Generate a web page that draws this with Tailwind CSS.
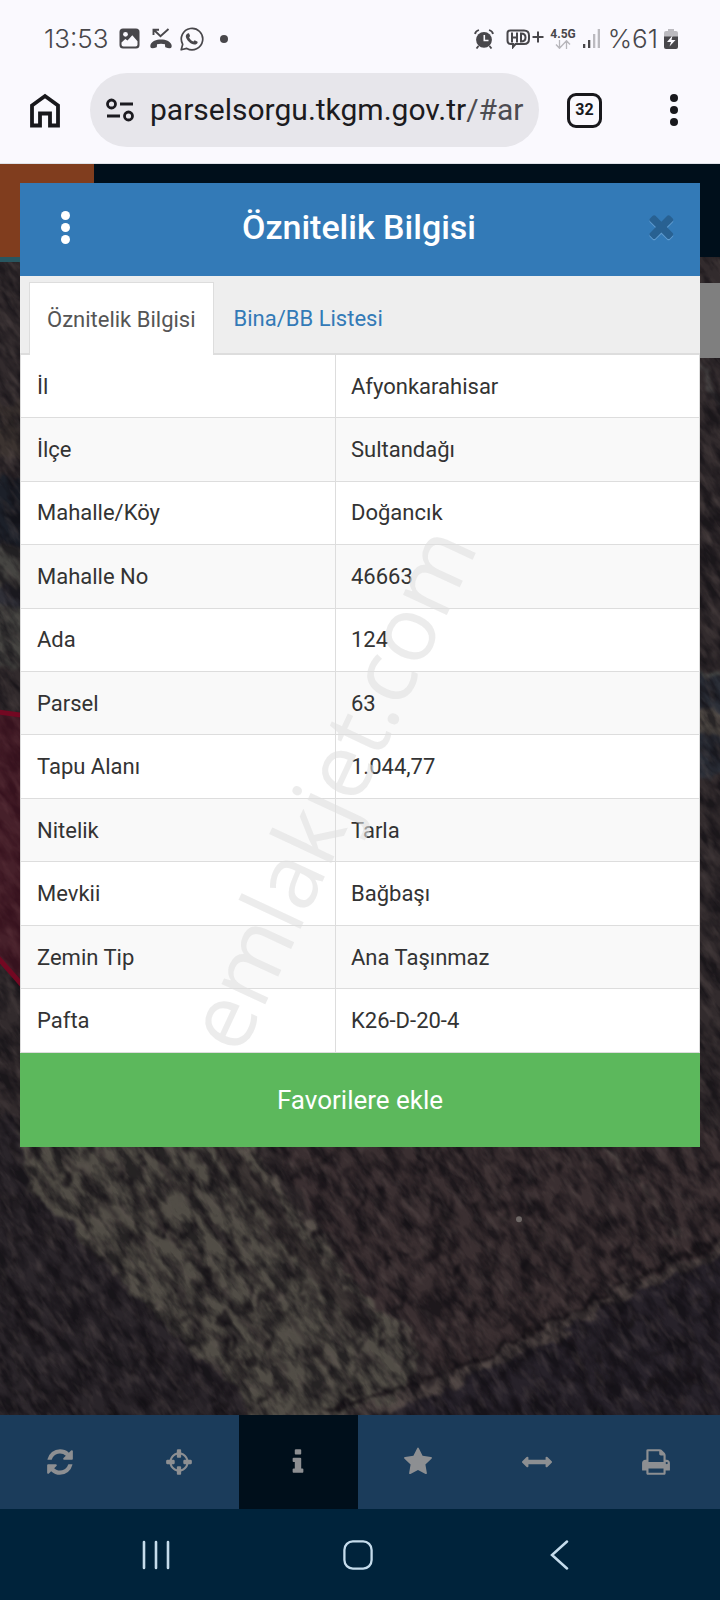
<!DOCTYPE html>
<html lang="tr">
<head>
<meta charset="utf-8">
<meta name="viewport" content="width=device-width, initial-scale=1">
<title>Parsel Sorgu</title>
<script src="https://cdn.jsdelivr.net/npm/@tailwindcss/browser@4"></script>
</head>
<body class="flex min-h-screen flex-col bg-[#00233b] font-['Roboto',sans-serif]">

<header class="border-b border-[#dfe2e8] bg-[#faf9fe] pb-4">
  <!-- Device status -->
  <div class="flex h-[73px] items-center pt-1 pr-[42px] pl-11 text-[#48474b]">
    <span class="font-['Inter',sans-serif] text-[26px] font-light">13:53</span>
    <svg class="ml-2.5 size-[21px]" viewBox="0 0 21 21" aria-hidden="true"><rect x=".5" y=".5" width="20" height="20" rx="3.5" fill="currentColor"/><circle cx="6.5" cy="6.3" r="2.4" fill="#faf9fe"/><path d="M2.5 14.5 6.3 11l2.2 1.5 4.8-5.3 5.2 6V16.500q0 2-2 2h-12q-2 0-2-2z" fill="#faf9fe"/></svg>
    <svg class="ml-2.5 h-[21px] w-[22px]" viewBox="0 0 22 21" aria-hidden="true"><path d="M3.500 7V1.800H9M4 2l6.500 6.300L18.500 1" fill="none" stroke="currentColor" stroke-width="1.900"/><path d="M1 20q-1-1-.6-3C2 13 6 11.500 11 11.500S20 13 21.600 17q.4 2-.6 3-2.500.4-5-.4-.8-.3-.9-1.200l-.1-2.200q-4-1-8 0l-.1 2.200q-.1.9-.9 1.200-2.500.8-5 .4z" fill="currentColor"/></svg>
    <svg class="ml-2 size-6" viewBox="0 0 24 24" aria-hidden="true"><path d="M1.200 22.800l1.500-5.500A10.700 10.700 0 1 1 6.800 21.400z" fill="none" stroke="currentColor" stroke-width="1.700" stroke-linejoin="round"/><path d="M8.300 6.200c.5 0 .7.100.9.600l.8 1.900c.1.400 0 .6-.9 1.700.9 1.900 2.400 3.300 4.500 4.200.9-1.100 1-1.400 1.500-1.200l2.100 1c.5.300.5.400.4 1.100-.3 1.500-1.900 2.200-3.100 2.100-3.700-.5-8-4.300-8.700-8.200 0-1.300.9-2.900 2.500-3.200z" fill="currentColor"/></svg>
    <span class="ml-4 size-2 rounded-full bg-current"></span>
    <svg class="ml-auto size-5" viewBox="0 0 20 20" aria-hidden="true"><circle cx="10" cy="10.800" r="7.900" fill="currentColor"/><path d="M1 5q.5-3 4-4M19 5q-.5-3-4-4M4.500 17 2.500 19.500M15.500 17l2 2.500" fill="none" stroke="currentColor" stroke-width="1.800"/><path d="M10.300 6v5.500h4.200" fill="none" stroke="#faf9fe" stroke-width="1.600"/></svg>
    <svg class="ml-3 h-5 w-[38px]" viewBox="0 0 38 20" aria-hidden="true"><path d="M4 1.500h14q5 0 5 5v3.500q0 5-5 5h-8.500L7 18v-3H5q-3.500 0-3.500-3.500V4q0-2.500 2.500-2.500zM6 3.500v10M11 3.500v10M6 8.500h5M15 4.500v8q4.500 0 4.500-4t-4.500-4zM26.500 8h11M32 2.500v11" fill="none" stroke="currentColor" stroke-width="2"/></svg>
    <span class="ml-1.5 flex flex-col items-center text-[12px] leading-3 font-bold">4.5G
      <svg class="h-[9px] w-4" viewBox="0 0 16 9" aria-hidden="true"><path d="M4.500 0v8M1 4.500l3.500 3.800L8 4.500M11.500 9V1M8 4.500 11.500.7 15 4.500" fill="none" stroke="#b7b6bb" stroke-width="1.300"/></svg></span>
    <svg class="ml-1.5 h-[19px] w-[18px]" viewBox="0 0 18 19" aria-hidden="true"><path d="M1 15h2.300v4H1zM6 11h2.300v8H6z" fill="currentColor"/><path d="M11 5h2.300v14H11zM15.700 0H18v19h-2.300z" fill="#bbbabf"/></svg>
    <span class="ml-2 font-['Inter',sans-serif] text-[26px] font-light">%61</span>
    <svg class="ml-1.5 h-5 w-[14px]" viewBox="0 0 14 20" aria-hidden="true"><path d="M4 0h6v2h2q2 0 2 2v4H0V4q0-2 2-2h2z" fill="#bbbabf"/><path d="M0 7.500h14V18q0 2-2 2H2q-2 0-2-2z" fill="currentColor"/><path d="M8.500 6.500 3 13h4l-1.500 4.500L11.500 11h-4z" fill="#faf9fe"/></svg>
  </div>
  <!-- Browser toolbar -->
  <div class="flex items-center">
    <button type="button" aria-label="Ana sayfa" class="ml-[29px] shrink-0"><svg class="h-[35px] w-8" viewBox="0 0 32 35" aria-hidden="true"><path d="M3 12.500 16 3l13 9.500V32.500h-8V20.500H11v12H3z" fill="none" stroke="#18181c" stroke-width="3.800"/></svg></button>
    <div class="ml-[29px] flex h-[74px] min-w-0 flex-1 items-center rounded-full bg-[#e7e6eb] pr-3 pl-4">
      <svg class="h-6 w-7 shrink-0" viewBox="0 0 28 24" aria-hidden="true"><g fill="none" stroke="#1c1b20" stroke-width="2.800"><circle cx="5.500" cy="6" r="4"/><circle cx="22.500" cy="18" r="4"/><path d="M14 6h13M1 18h13"/></g></svg>
      <div aria-label="Adres" role="textbox" class="ml-4 min-w-0 flex-1 overflow-hidden text-[30px] leading-10 whitespace-nowrap text-[#1c1b20]">parselsorgu.tkgm.gov.tr<span class="text-[#4d4c51]">/#ar</span></div>
    </div>
    <button type="button" aria-label="32 sekme" class="ml-7 flex size-[35px] shrink-0 items-center justify-center rounded-[9px] border-[3px] border-[#18181c] text-base font-bold text-[#18181c]">32</button>
    <button type="button" aria-label="Menü" class="mr-[42px] ml-[68px] flex shrink-0 flex-col gap-1"><i class="size-2 rounded-full bg-[#18181c]"></i><i class="size-2 rounded-full bg-[#18181c]"></i><i class="size-2 rounded-full bg-[#18181c]"></i></button>
  </div>
</header>

<main class="relative flex flex-1 flex-col bg-[#2b2729]">
  <div class="h-[93px] bg-[#000f1b]"><div class="h-full w-[94px] bg-[#803d1e]"></div></div>

  <!-- Dimmed aerial map -->
  <div class="relative min-h-[1150px] flex-1 overflow-hidden">
    <svg class="absolute inset-0 size-full" viewBox="0 257 720 1159" preserveAspectRatio="none" aria-hidden="true">
      <defs>
        <filter id="soil" x="0" y="0" width="100%" height="100%" color-interpolation-filters="sRGB"><feTurbulence type="fractalNoise" baseFrequency=".035 .09" numOctaves="4" seed="8"/><feColorMatrix values="0 0 0 0 .06  0 0 0 0 .05  0 0 0 0 .07  3 0 0 0 -1.100"/></filter>
        <filter id="dust" x="0" y="0" width="100%" height="100%" color-interpolation-filters="sRGB"><feTurbulence type="fractalNoise" baseFrequency=".05 .14" numOctaves="3" seed="21"/><feColorMatrix values="0 0 0 0 .42  0 0 0 0 .37  0 0 0 0 .36  0 2.500 0 0 -1.200"/></filter>
        <filter id="rough" filterUnits="userSpaceOnUse" x="-20" y="240" width="760" height="1200" color-interpolation-filters="sRGB"><feTurbulence type="fractalNoise" baseFrequency=".06" numOctaves="3" seed="3"/><feDisplacementMap in="SourceGraphic" scale="22" xChannelSelector="R" yChannelSelector="G"/><feGaussianBlur stdDeviation="1.500"/></filter>
      </defs>
      <rect y="257" width="720" height="1159" fill="#322b2d"/>
      <g filter="url(#rough)">
        <path d="M-20 1120H20L32 1190 83 1243 142 1303 197 1353 240 1395V1440H-20z" fill="#2a252a"/>
        <path d="M18 1130H240L321 1243 358 1290 425 1350 400 1395 330 1425H250L232 1385 142 1303 83 1243 32 1190z" fill="#514d46"/>
        <path d="M260 1130H740V1240L574 1318 440 1375 360 1290z" fill="#3a2f31"/>
        <g fill="none" stroke="#3b3634" stroke-width="7">
          <path d="M50 1140 250 1380"/><path d="M95 1140 290 1375"/><path d="M140 1140 335 1375"/><path d="M185 1140 370 1365"/>
        </g>
        <path d="M215 1135 300 1250 370 1330" fill="none" stroke="#373130" stroke-width="20"/>
        <path d="M240 1140 321 1243 358 1290 420 1345" fill="none" stroke="#57504a" stroke-width="5"/>
        <path d="M344 1430 427 1395 574 1325 740 1245V1440H344z" fill="#27222a"/>
        <path d="M320 1425 427 1393 574 1323 640 1286 740 1242" fill="none" stroke="#4c4341" stroke-width="11"/>
        <path d="M320 1412 427 1382 574 1313 640 1275 740 1230" fill="none" stroke="#1b1619" stroke-width="4"/>
        <path d="M600 1145 650 1195 682 1242" fill="none" stroke="#4b4341" stroke-width="4"/>
        <path d="M-10 400H40V470L-10 450z" fill="#3b3330"/>
        <path d="M-10 545 40 548V672L-10 665z" fill="#464542"/><path d="M-10 585 40 592V612L-10 604z" fill="#303038"/>
        <path d="M-10 480H30V545H-10z" fill="#1c2029"/>
        <path d="M690 674 735 680V780L690 772z" fill="#2b2f38"/><path d="M690 708 735 716V738L690 732z" fill="#5a544d"/><path d="M690 674 735 680" stroke="#505451" stroke-width="4"/>
        <path d="M690 350 735 430" stroke="#4a4747" stroke-width="6"/>
      </g>
      <g id="trees" fill="#191519" filter="url(#rough)"></g>
      <g transform="rotate(55 360 840)">
        <rect x="-500" y="100" width="1720" height="1480" filter="url(#soil)" opacity=".65"/>
        <rect x="-500" y="100" width="1720" height="1480" filter="url(#dust)" opacity=".3"/>
      </g>
      <path d="M-5 712 40 718V1006L-5 955z" fill="#6d0b26" fill-opacity=".35" stroke="#730822" stroke-width="5"/>
      <circle cx="519" cy="1220" r="3" fill="#6e6866"/>
      <path d="M0 257H94V262H0z" fill="#285761"/>
      <path d="M690 283H720V358H690z" fill="#7f7f7f"/>
    </svg>
  </div>

  <nav aria-label="Harita araçları" class="grid h-[94px] grid-cols-6 bg-[#1b3c5b] pr-1 text-[#8d8f92]">
    <button type="button" aria-label="Yenile" class="flex items-center justify-center"><svg class="size-[30px]" viewBox="0 0 1792 1792" fill="currentColor" aria-hidden="true"><path d="M1639 1056q0 5-1 7-64 268-268 434.5t-478 166.5q-146 0-282.5-55t-243.500-157l-129 129q-19 19-45 19t-45-19-19-45v-448q0-26 19-45t45-19h448q26 0 45 19t19 45-19 45l-137 137q71 66 161 102t187 36q134 0 250-65t186-179q11-17 53-117 8-23 30-23h192q13 0 22.500 9.500t9.500 22.500zm25-800v448q0 26-19 45t-45 19h-448q-26 0-45-19t-19-45 19-45l138-138q-148-137-349-137-134 0-250 65t-186 179q-11 17-53 117-8 23-30 23h-199q-13 0-22.500-9.500t-9.500-22.500v-7q65-268 270-434.500t480-166.500q146 0 284 55.500t245 156.500l130-129q19-19 45-19t45 19 19 45z"/></svg></button>
    <button type="button" aria-label="Konum" class="flex items-center justify-center"><svg class="size-[30px]" viewBox="0 0 1792 1792" fill="currentColor" aria-hidden="true"><path d="M1325 1024h-109q-26 0-45-19t-19-45v-128q0-26 19-45t45-19h109q-32-108-112.500-188.500t-188.500-112.500v109q0 26-19 45t-45 19h-128q-26 0-45-19t-19-45v-109q-108 32-188.500 112.500t-112.500 188.500h109q26 0 45 19t19 45v128q0 26-19 45t-45 19h-109q32 108 112.500 188.500t188.500 112.500v-109q0-26 19-45t45-19h128q26 0 45 19t19 45v109q108-32 188.500-112.500t112.500-188.500zm339-192v128q0 26-19 45t-45 19h-143q-37 161-154.500 278.500t-278.500 154.500v143q0 26-19 45t-45 19h-128q-26 0-45-19t-19-45v-143q-161-37-278.500-154.500t-154.500-278.500h-143q-26 0-45-19t-19-45v-128q0-26 19-45t45-19h143q37-161 154.500-278.500t278.500-154.500v-143q0-26 19-45t45-19h128q26 0 45 19t19 45v143q161 37 278.500 154.500t154.500 278.500h143q26 0 45 19t19 45z"/></svg></button>
    <button type="button" aria-label="Bilgi" aria-pressed="true" class="flex items-center justify-center bg-[#000f1b]"><svg class="size-[30px]" viewBox="0 0 1792 1792" fill="currentColor" aria-hidden="true"><path d="M1216 1344v128q0 26-19 45t-45 19h-512q-26 0-45-19t-19-45v-128q0-26 19-45t45-19h64v-384h-64q-26 0-45-19t-19-45v-128q0-26 19-45t45-19h384q26 0 45 19t19 45v576h64q26 0 45 19t19 45zm-128-1152v192q0 26-19 45t-45 19h-256q-26 0-45-19t-19-45v-192q0-26 19-45t45-19h256q26 0 45 19t19 45z"/></svg></button>
    <button type="button" aria-label="Favoriler" class="flex items-center justify-center"><svg class="size-[30px]" viewBox="0 0 1792 1792" fill="currentColor" aria-hidden="true"><path d="M1728 647q0 22-26 48l-363 354 86 500q1 7 1 20 0 21-10.500 35.500t-30.500 14.500q-19 0-40-12l-449-236-449 236q-22 12-40 12-21 0-31.500-14.500t-10.500-35.500q0-6 2-20l86-500-364-354q-25-27-25-48 0-37 56-46l502-73 225-455q19-41 49-41t49 41l225 455 502 73q56 9 56 46z"/></svg></button>
    <button type="button" aria-label="Ölçüm" class="flex items-center justify-center"><svg class="size-[30px]" viewBox="0 0 1792 1792" fill="currentColor" aria-hidden="true"><path d="M1792 896q0 26-19 45l-256 256q-19 19-45 19t-45-19-19-45v-128h-1024v128q0 26-19 45t-45 19-45-19l-256-256q-19-19-19-45t19-45l256-256q19-19 45-19t45 19 19 45v128h1024v-128q0-26 19-45t45-19 45 19l256 256q19 19 19 45z"/></svg></button>
    <button type="button" aria-label="Yazdır" class="flex items-center justify-center"><svg class="size-[30px]" viewBox="0 0 1792 1792" fill="currentColor" aria-hidden="true"><path d="M448 1536h896v-256h-896v256zm0-640h896v-384h-160q-40 0-68-28t-28-68v-160h-640v640zm1152 64q0-26-19-45t-45-19-45 19-19 45 19 45 45 19 45-19 19-45zm128 0v416q0 13-9.500 22.500t-22.500 9.500h-224v160q0 40-28 68t-68 28h-960q-40 0-68-28t-28-68v-160h-224q-13 0-22.500-9.500t-9.500-22.500v-416q0-79 56.500-135.500t135.500-56.500h64v-544q0-40 28-68t68-28h672q40 0 88 20t76 48l152 152q28 28 48 76t20 88v256h64q79 0 135.500 56.500t56.500 135.500z"/></svg></button>
  </nav>

  <!-- Attribute dialog -->
  <section role="dialog" aria-labelledby="dialog-title" class="absolute inset-x-5 top-[19px]">
    <div class="flex h-[93px] items-center justify-between bg-[#337ab7] pr-6 pb-1 pl-[41px]">
      <button type="button" aria-label="Seçenekler" class="flex flex-col gap-[3px]"><i class="size-[9px] rounded-full bg-white"></i><i class="size-[9px] rounded-full bg-white"></i><i class="size-[9px] rounded-full bg-white"></i></button>
      <h1 id="dialog-title" class="text-[34px] font-medium text-white">Öznitelik Bilgisi</h1>
      <button type="button" aria-label="Kapat"><svg class="h-[30px] w-7" viewBox="256 256 1344 1500" aria-hidden="true"><path transform="translate(0 70)" fill="#5f9bcf" d="M1490 1322q0 40-28 68l-136 136q-28 28-68 28t-68-28l-294-294-294 294q-28 28-68 28t-68-28l-136-136q-28-28-28-68t28-68l294-294-294-294q-28-28-28-68t28-68l136-136q28-28 68-28t68 28l294 294 294-294q28-28 68-28t68 28l136 136q28 28 28 68t-28 68l-294 294 294 294q28 28 28 68z"/><path fill="#286192" d="M1490 1322q0 40-28 68l-136 136q-28 28-68 28t-68-28l-294-294-294 294q-28 28-68 28t-68-28l-136-136q-28-28-28-68t28-68l294-294-294-294q-28-28-28-68t28-68l136-136q28-28 68-28t68 28l294 294 294-294q28-28 68-28t68 28l136 136q28 28 28 68t-28 68l-294 294 294 294q28 28 28 68z"/></svg></button>
    </div>
    <div role="tablist" class="flex h-[79px] items-end border-b-2 border-[#ddd] bg-[#eee] pl-[9px] text-[22px]">
      <button type="button" role="tab" aria-selected="true" class="-mb-0.5 h-[73px] border border-b-0 border-[#ddd] bg-white px-[17px] text-[#555]">Öznitelik Bilgisi</button>
      <button type="button" role="tab" aria-selected="false" class="-mb-0.5 h-[73px] px-5 text-[#337ab7]">Bina/BB Listesi</button>
    </div>
    <table class="h-[698px] w-full border-collapse border border-t-0 border-[#ddd] bg-white text-[22px] text-[#333] [&_td]:border-t [&_td]:border-l [&_td]:border-[#ddd] [&_td]:px-[15px] [&_td]:py-0 [&_th]:w-[315px] [&_th]:border-t [&_th]:border-[#ddd] [&_th]:px-4 [&_th]:py-0 [&_th]:text-left [&_th]:font-normal [&_tr:first-child>*]:border-t-0 [&_tr:nth-child(even)]:bg-[#f9f9f9]">
      <tbody>
        <tr><th scope="row">İl</th><td>Afyonkarahisar</td></tr>
        <tr><th scope="row">İlçe</th><td>Sultandağı</td></tr>
        <tr><th scope="row">Mahalle/Köy</th><td>Doğancık</td></tr>
        <tr><th scope="row">Mahalle No</th><td>46663</td></tr>
        <tr><th scope="row">Ada</th><td>124</td></tr>
        <tr><th scope="row">Parsel</th><td>63</td></tr>
        <tr><th scope="row">Tapu Alanı</th><td>1.044,77</td></tr>
        <tr><th scope="row">Nitelik</th><td>Tarla</td></tr>
        <tr><th scope="row">Mevkii</th><td>Bağbaşı</td></tr>
        <tr><th scope="row">Zemin Tip</th><td>Ana Taşınmaz</td></tr>
        <tr><th scope="row">Pafta</th><td>K26-D-20-4</td></tr>
      </tbody>
    </table>
    <button type="button" class="h-[94px] w-full bg-[#5cb85c] text-[26px] text-white">Favorilere ekle</button>
    <div class="pointer-events-none absolute top-[604px] left-[308px] -translate-x-1/2 -translate-y-1/2 -rotate-[65deg] font-['Open_Sans',sans-serif] text-[90px] leading-none whitespace-nowrap text-[#e0e0e0]/60">emlakjet.com</div>
  </section>
</main>

<!-- System navigation -->
<nav aria-label="Sistem" class="flex h-[91px] items-center justify-between pr-[146px] pl-[141px] text-[#c5dcec]">
  <button type="button" aria-label="Son uygulamalar"><svg class="h-[30px] w-[30px]" viewBox="0 0 30 30" aria-hidden="true"><path d="M3 2v26M15 2v26M27 2v26" stroke="currentColor" stroke-width="2.600" stroke-linecap="round"/></svg></button>
  <button type="button" aria-label="Ana ekran"><svg class="h-[30px] w-[30px]" viewBox="0 0 30 30" aria-hidden="true"><rect x="1.400" y="1.400" width="27.200" height="27.200" rx="8.500" fill="none" stroke="currentColor" stroke-width="2.300"/></svg></button>
  <button type="button" aria-label="Geri"><svg class="h-[30px] w-[30px]" viewBox="0 0 30 30" aria-hidden="true"><path d="M23 1.500 8 15l15 13.500" fill="none" stroke="currentColor" stroke-width="2.500" stroke-linecap="round"/></svg></button>
</nav>

<script>
  // Scatter the orchard rows with a fixed seed so that the map is stable.
  let seed = 17;
  const rnd = () => (seed = (seed * 16807) % 2147483647) / 2147483647;
  let trees = '';
  for (let i = 0; i < 620; i++) {
    const x = rnd() * 720;
    const y = 1140 + rnd() * 280;
    const light = x < 240 + (y - 1150) * 0.9 && x > 30 + (y - 1170) * 0.95;
    if (light && rnd() < 0.35) continue;
    trees += `<ellipse cx="${x}" cy="${y}" rx="${1.5 + rnd() * 3}" ry="${3 + rnd() * 6}" opacity="${0.3 + rnd() * 0.5}"/>`;
  }
  document.getElementById('trees').innerHTML = trees;
</script>
</body>
</html>
